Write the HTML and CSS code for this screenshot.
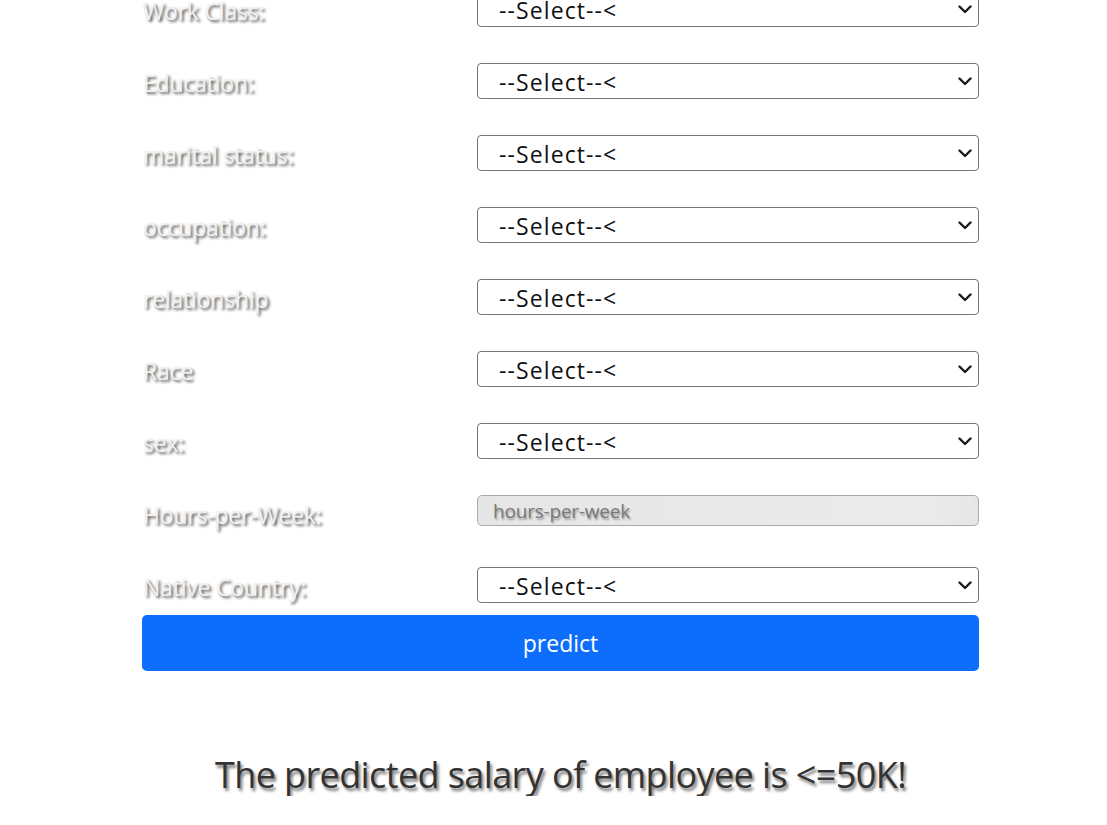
FILE: index.html
```html
<!DOCTYPE html>
<html>
<head>
<meta charset="utf-8">
<link rel="stylesheet" href="styles.css">
</head>
<body>
<main class="page">
  <form class="form">
    <div class="row">
      <label class="label">Work Class:</label>
      <div class="field"><div class="select">--Select--&lt;</div><svg class="chev" viewBox="0 0 14 9"><path d="M1.5 1.5 L7 7 L12.5 1.5" fill="none" stroke="#1a1a1a" stroke-width="2.4" stroke-linecap="round" stroke-linejoin="round"/></svg></div>
    </div>
    <div class="row">
      <label class="label">Education:</label>
      <div class="field"><div class="select">--Select--&lt;</div><svg class="chev" viewBox="0 0 14 9"><path d="M1.5 1.5 L7 7 L12.5 1.5" fill="none" stroke="#1a1a1a" stroke-width="2.4" stroke-linecap="round" stroke-linejoin="round"/></svg></div>
    </div>
    <div class="row">
      <label class="label">marital status:</label>
      <div class="field"><div class="select">--Select--&lt;</div><svg class="chev" viewBox="0 0 14 9"><path d="M1.5 1.5 L7 7 L12.5 1.5" fill="none" stroke="#1a1a1a" stroke-width="2.4" stroke-linecap="round" stroke-linejoin="round"/></svg></div>
    </div>
    <div class="row">
      <label class="label">occupation:</label>
      <div class="field"><div class="select">--Select--&lt;</div><svg class="chev" viewBox="0 0 14 9"><path d="M1.5 1.5 L7 7 L12.5 1.5" fill="none" stroke="#1a1a1a" stroke-width="2.4" stroke-linecap="round" stroke-linejoin="round"/></svg></div>
    </div>
    <div class="row">
      <label class="label">relationship</label>
      <div class="field"><div class="select">--Select--&lt;</div><svg class="chev" viewBox="0 0 14 9"><path d="M1.5 1.5 L7 7 L12.5 1.5" fill="none" stroke="#1a1a1a" stroke-width="2.4" stroke-linecap="round" stroke-linejoin="round"/></svg></div>
    </div>
    <div class="row">
      <label class="label">Race</label>
      <div class="field"><div class="select">--Select--&lt;</div><svg class="chev" viewBox="0 0 14 9"><path d="M1.5 1.5 L7 7 L12.5 1.5" fill="none" stroke="#1a1a1a" stroke-width="2.4" stroke-linecap="round" stroke-linejoin="round"/></svg></div>
    </div>
    <div class="row">
      <label class="label">sex:</label>
      <div class="field"><div class="select">--Select--&lt;</div><svg class="chev" viewBox="0 0 14 9"><path d="M1.5 1.5 L7 7 L12.5 1.5" fill="none" stroke="#1a1a1a" stroke-width="2.4" stroke-linecap="round" stroke-linejoin="round"/></svg></div>
    </div>
    <div class="row">
      <label class="label">Hours-per-Week:</label>
      <div class="field"><input class="input" type="text" placeholder="hours-per-week"></div>
    </div>
    <div class="row last">
      <label class="label">Native Country:</label>
      <div class="field"><div class="select">--Select--&lt;</div><svg class="chev" viewBox="0 0 14 9"><path d="M1.5 1.5 L7 7 L12.5 1.5" fill="none" stroke="#1a1a1a" stroke-width="2.4" stroke-linecap="round" stroke-linejoin="round"/></svg></div>
    </div>
    <button class="btn" type="button">predict</button>
  </form>
  <h2 class="result">The predicted salary of employee is &lt;=50K!</h2>
</main>
</body>
</html>
```

FILE: styles.css
```css
html, body {
  margin: 0;
  padding: 0;
  background: #ffffff;
}
body {
  font-family: "Open Sans", "Noto Sans", sans-serif;
  overflow: hidden;
}
.page {
  width: 837px;
  margin: -9px 0 0 142px;
}
.form {
  display: flex;
  flex-direction: column;
}
.row {
  display: flex;
  align-items: flex-start;
  height: 36px;
  margin-bottom: 36px;
}
.row.last {
  margin-bottom: 12px;
}
.label {
  width: 335px;
  flex: none;
  padding-left: 1px;
  box-sizing: border-box;
  font-size: 23px;
  line-height: 41px;
  color: #f2f2f2;
  text-shadow: 2px 2px 3px #4a4a4a;
  letter-spacing: -0.2px;
}
.field {
  position: relative;
  flex: 1;
}
.select {
  height: 36px;
  box-sizing: border-box;
  border: 1px solid #767676;
  border-radius: 4px;
  padding: 2px 0 0 21px;
  font-size: 23px;
  line-height: 33px;
  color: #111;
  letter-spacing: 1.1px;
}
.chev {
  position: absolute;
  right: 7px;
  top: 14px;
  width: 14px;
  height: 9px;
}
.input {
  display: block;
  width: 100%;
  height: 31px;
  box-sizing: border-box;
  border: 1px solid #aaaaaa;
  border-radius: 5px;
  background: linear-gradient(90deg, #e6e6e6, #ebebeb 90%, #e6e6e6);
  padding: 0 0 0 15px;
  font-family: "Open Sans", "Noto Sans", sans-serif;
  font-size: 19px;
  letter-spacing: -0.2px;
  outline: none;
}
.input::placeholder {
  color: #7a7a7a;
  text-shadow: 1px 2px 2px #9a9a9a;
  opacity: 1;
}
.btn {
  display: block;
  width: 100%;
  height: 56px;
  border: none;
  border-radius: 5px;
  background: #0d6efd;
  color: #ffffff;
  font-family: "Open Sans", "Noto Sans", sans-serif;
  font-size: 23px;
  padding: 0;
}
.result {
  margin: 82px 0 0 0;
  text-align: center;
  font-size: 36px;
  font-weight: normal;
  line-height: 43px;
  color: #333333;
  text-shadow: 2px 3px 3px #777777;
  letter-spacing: -0.6px;
}
```
